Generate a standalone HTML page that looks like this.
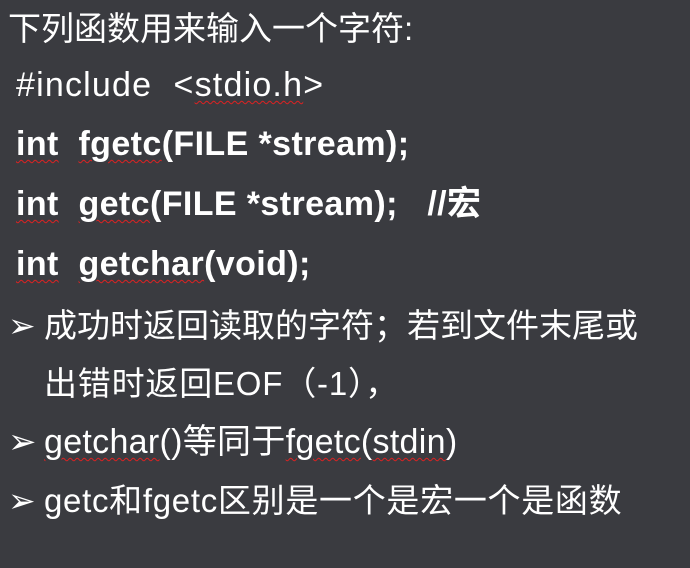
<!DOCTYPE html>
<html><head><meta charset="utf-8"><style>
body{margin:0;width:690px;height:568px;background:#3a3b40;overflow:hidden;position:relative;font-family:"Liberation Sans","Noto Sans CJK SC",sans-serif;color:#fff}
.l{position:absolute;white-space:nowrap;line-height:1;}
.b{font-weight:bold;letter-spacing:0.4px}
.w{text-decoration:underline wavy #d22;text-decoration-thickness:1px;text-underline-offset:4px}
.ar{display:inline-block;width:36px;letter-spacing:0}
</style></head><body>
<div class="l" style="left:8px;top:12px;font-size:33px">下列函数用来输入一个字符:</div>
<div class="l" style="left:16px;top:68px;font-size:34px;letter-spacing:1.2px">#include &nbsp;&lt;<span class="w">stdio.h</span>&gt;</div>
<div class="l b" style="left:16px;top:127px;font-size:34px"><span class="w">int</span>&nbsp; <span class="w">fgetc</span>(FILE *stream);</div>
<div class="l b" style="left:16px;top:187px;font-size:34px"><span class="w">int</span>&nbsp; <span class="w">getc</span>(FILE *stream);&nbsp;&nbsp; //宏</div>
<div class="l b" style="left:16px;top:247px;font-size:34px"><span class="w">int</span>&nbsp; <span class="w">getchar</span>(void);</div>
<div class="l" style="left:8px;top:309px;font-size:33px"><span class="ar">➢</span>成功时返回读取的字符；若到文件末尾或</div>
<div class="l" style="left:44px;top:367px;font-size:33px;letter-spacing:0.8px">出错时返回EOF（-1），</div>
<div class="l" style="left:8px;top:425px;font-size:34px;letter-spacing:0.3px"><span class="ar">➢</span><span class="w">getchar</span>()等同于<span class="w">fgetc</span>(<span class="w">stdin</span>)</div>
<div class="l" style="left:8px;top:484px;font-size:33px;letter-spacing:0.7px"><span class="ar">➢</span>getc和fgetc区别是一个是宏一个是函数</div>
</body></html>
